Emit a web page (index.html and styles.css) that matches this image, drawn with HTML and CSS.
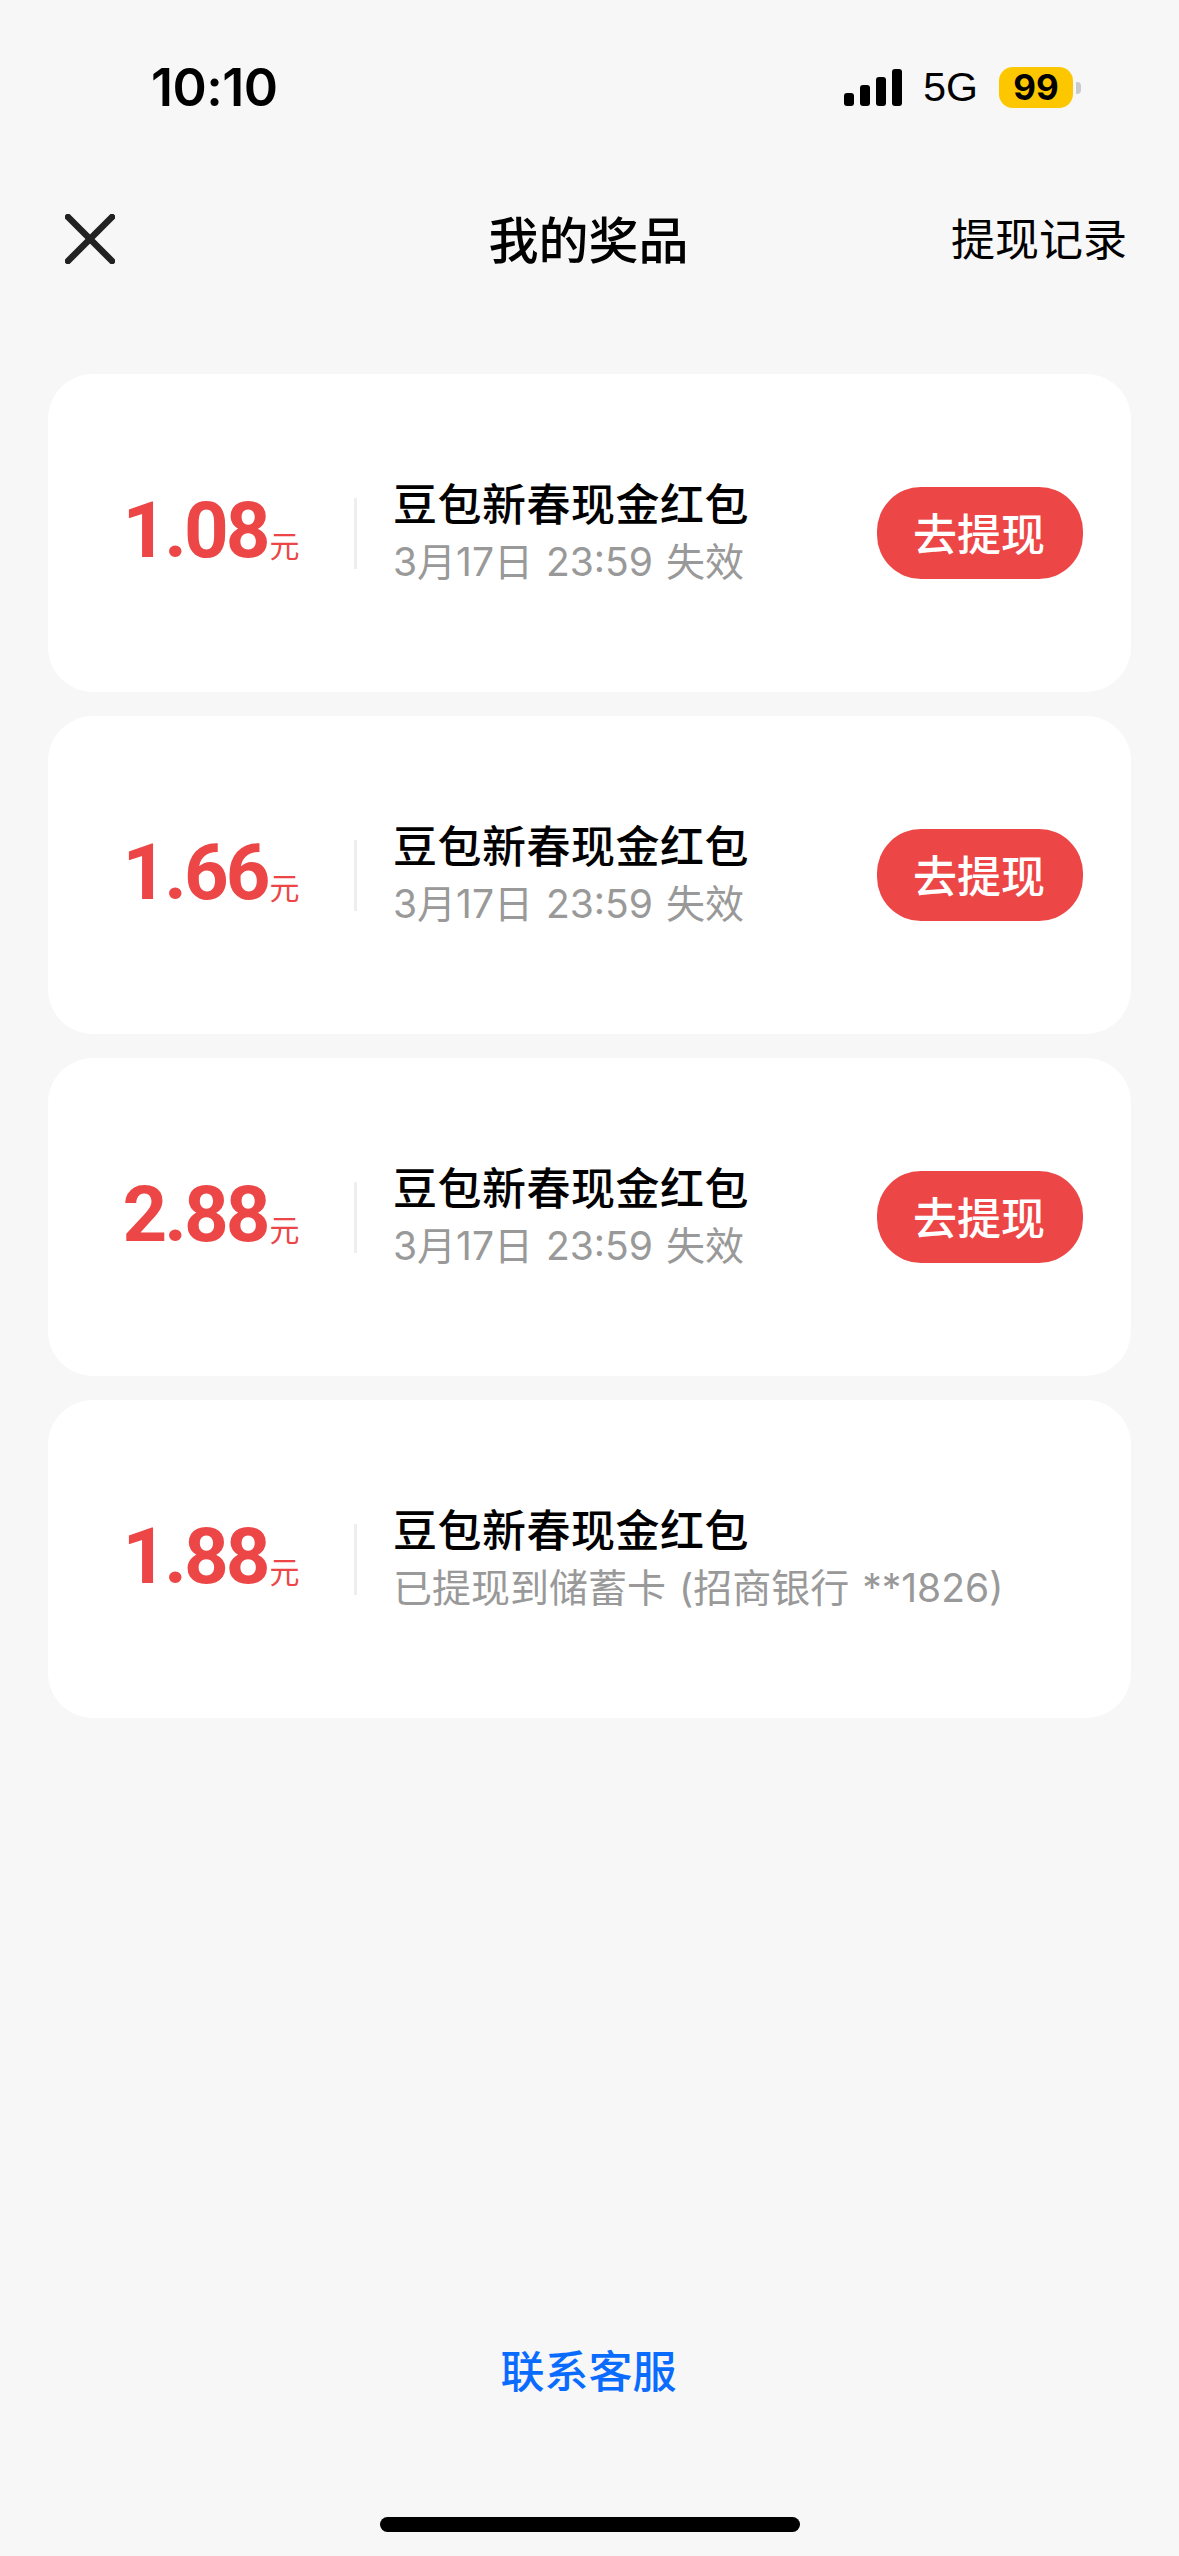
FILE: index.html
```html
<!DOCTYPE html>
<html lang="zh-CN">
<head>
    <meta charset="UTF-8">
    <meta name="viewport" content="width=device-width, initial-scale=1.0">
    <title>我的奖品</title>
    <link rel="stylesheet" href="styles.css">
</head>
<body>
    <div class="page">
        <div class="status-bar">
            <span class="status-time">10:10</span>
            <div class="status-right">
                <div class="signal">
                    <i class="bar-1"></i>
                    <i class="bar-2"></i>
                    <i class="bar-3"></i>
                    <i class="bar-4"></i>
                </div>
                <span class="network">5G</span>
                <div class="battery">99</div>
                <div class="battery-cap"></div>
            </div>
        </div>

        <div class="nav-bar">
            <svg class="close-icon" viewBox="0 0 50 50" width="50" height="50">
                <path d="M3 3 L47 47 M47 3 L3 47" stroke="#222" stroke-width="6.5" stroke-linecap="round" fill="none"/>
            </svg>
            <h1>我的奖品</h1>
            <span class="nav-link">提现记录</span>
        </div>

        <div class="prize-list">
            <div class="prize-card">
                <div class="amount"><span class="num">1.08</span><span class="unit">元</span></div>
                <div class="divider"></div>
                <div class="info">
                    <div class="info-title">豆包新春现金红包</div>
                    <div class="info-sub">3月17日 23:59 失效</div>
                </div>
                <button class="withdraw-button">去提现</button>
            </div>
            <div class="prize-card">
                <div class="amount"><span class="num">1.66</span><span class="unit">元</span></div>
                <div class="divider"></div>
                <div class="info">
                    <div class="info-title">豆包新春现金红包</div>
                    <div class="info-sub">3月17日 23:59 失效</div>
                </div>
                <button class="withdraw-button">去提现</button>
            </div>
            <div class="prize-card">
                <div class="amount"><span class="num">2.88</span><span class="unit">元</span></div>
                <div class="divider"></div>
                <div class="info">
                    <div class="info-title">豆包新春现金红包</div>
                    <div class="info-sub">3月17日 23:59 失效</div>
                </div>
                <button class="withdraw-button">去提现</button>
            </div>
            <div class="prize-card">
                <div class="amount"><span class="num">1.88</span><span class="unit">元</span></div>
                <div class="divider"></div>
                <div class="info">
                    <div class="info-title">豆包新春现金红包</div>
                    <div class="info-sub">已提现到储蓄卡 (招商银行 **1826)</div>
                </div>
            </div>
        </div>

        <div class="footer">
            <span class="service-link">联系客服</span>
            <div class="home-bar"></div>
        </div>
    </div>
</body>
</html>
```

FILE: styles.css
```css
body {
    margin: 0;
    background: #f7f7f7;
    font-family: 'Inter', 'Noto Sans CJK SC', sans-serif;
    color: #000;
}
.page {
    width: 1179px;
    height: 2556px;
    display: flex;
    flex-direction: column;
    overflow: hidden;
}
.status-bar {
    height: 210px;
    display: flex;
    justify-content: space-between;
    align-items: flex-start;
    padding: 56px 98px 0 151px;
    box-sizing: border-box;
}
.status-time {
    font-size: 52px;
    line-height: 63px;
    font-weight: 600;
    letter-spacing: -0.5px;
}
.status-right {
    display: flex;
    align-items: center;
    height: 63px;
}
.signal {
    display: flex;
    align-items: flex-end;
    gap: 6px;
    margin-right: 21px;
}
.signal i {
    display: block;
    width: 10px;
    border-radius: 3px;
    background: #000;
}
.bar-1 { height: 13px; }
.bar-2 { height: 21px; }
.bar-3 { height: 29px; }
.bar-4 { height: 37px; }
.network {
    font-family: 'Liberation Sans', sans-serif;
    font-size: 41px;
    margin-right: 21px;
}
.battery {
    width: 74px;
    height: 41px;
    border-radius: 14px;
    background: #fdc700;
    font-size: 35px;
    line-height: 41px;
    font-weight: 700;
    text-align: center;
}
.battery-cap {
    width: 5px;
    height: 12px;
    margin-left: 3px;
    border-radius: 0 4px 4px 0;
    background: #c8cacd;
}
.nav-bar {
    height: 54px;
    display: flex;
    align-items: center;
    justify-content: space-between;
    position: relative;
    padding: 0 52px 0 65px;
}
.close-icon {
    margin-top: 4px;
}
.nav-bar h1 {
    margin: 0;
    font-size: 50px;
    font-weight: 500;
    position: absolute;
    left: 0;
    right: 2px;
    text-align: center;
}
.nav-link {
    font-size: 44px;
}
.prize-list {
    display: flex;
    flex-direction: column;
    gap: 24px;
    margin: 110px 48px 0;
}
.prize-card {
    height: 318px;
    background: #fff;
    border-radius: 45px;
    display: flex;
    align-items: center;
    padding-right: 48px;
}
.amount {
    width: 306px;
    padding: 0 0 5px 20px;
    box-sizing: border-box;
    display: flex;
    justify-content: center;
    align-items: baseline;
    color: #ec4646;
    font-family: 'Roboto', 'Noto Sans CJK SC', sans-serif;
}
.num {
    font-size: 78px;
    font-weight: 700;
    letter-spacing: -3px;
}
.unit {
    font-size: 30px;
    margin-left: 2px;
}
.divider {
    width: 3px;
    height: 71px;
    background: #eee;
}
.info {
    margin-left: 36px;
    flex: 1;
}
.info-title {
    font-size: 44px;
    line-height: 58px;
    font-weight: 500;
    letter-spacing: 0.5px;
}
.info-sub {
    font-size: 39px;
    line-height: 56px;
    color: #999;
    word-spacing: 2px;
}
.withdraw-button {
    width: 206px;
    height: 92px;
    border: none;
    border-radius: 44px;
    background: #ec4646;
    color: #fff;
    font-family: inherit;
    font-size: 44px;
    font-weight: 500;
    padding: 0 2px 3px 0;
}
.footer {
    margin-top: auto;
    display: flex;
    flex-direction: column;
    align-items: center;
}
.service-link {
    font-size: 44px;
    line-height: 64px;
    font-weight: 500;
    color: #0a6cff;
    padding-right: 2px;
}
.home-bar {
    width: 420px;
    height: 15px;
    margin: 113px 0 24px;
    border-radius: 8px;
    background: #000;
}
```
